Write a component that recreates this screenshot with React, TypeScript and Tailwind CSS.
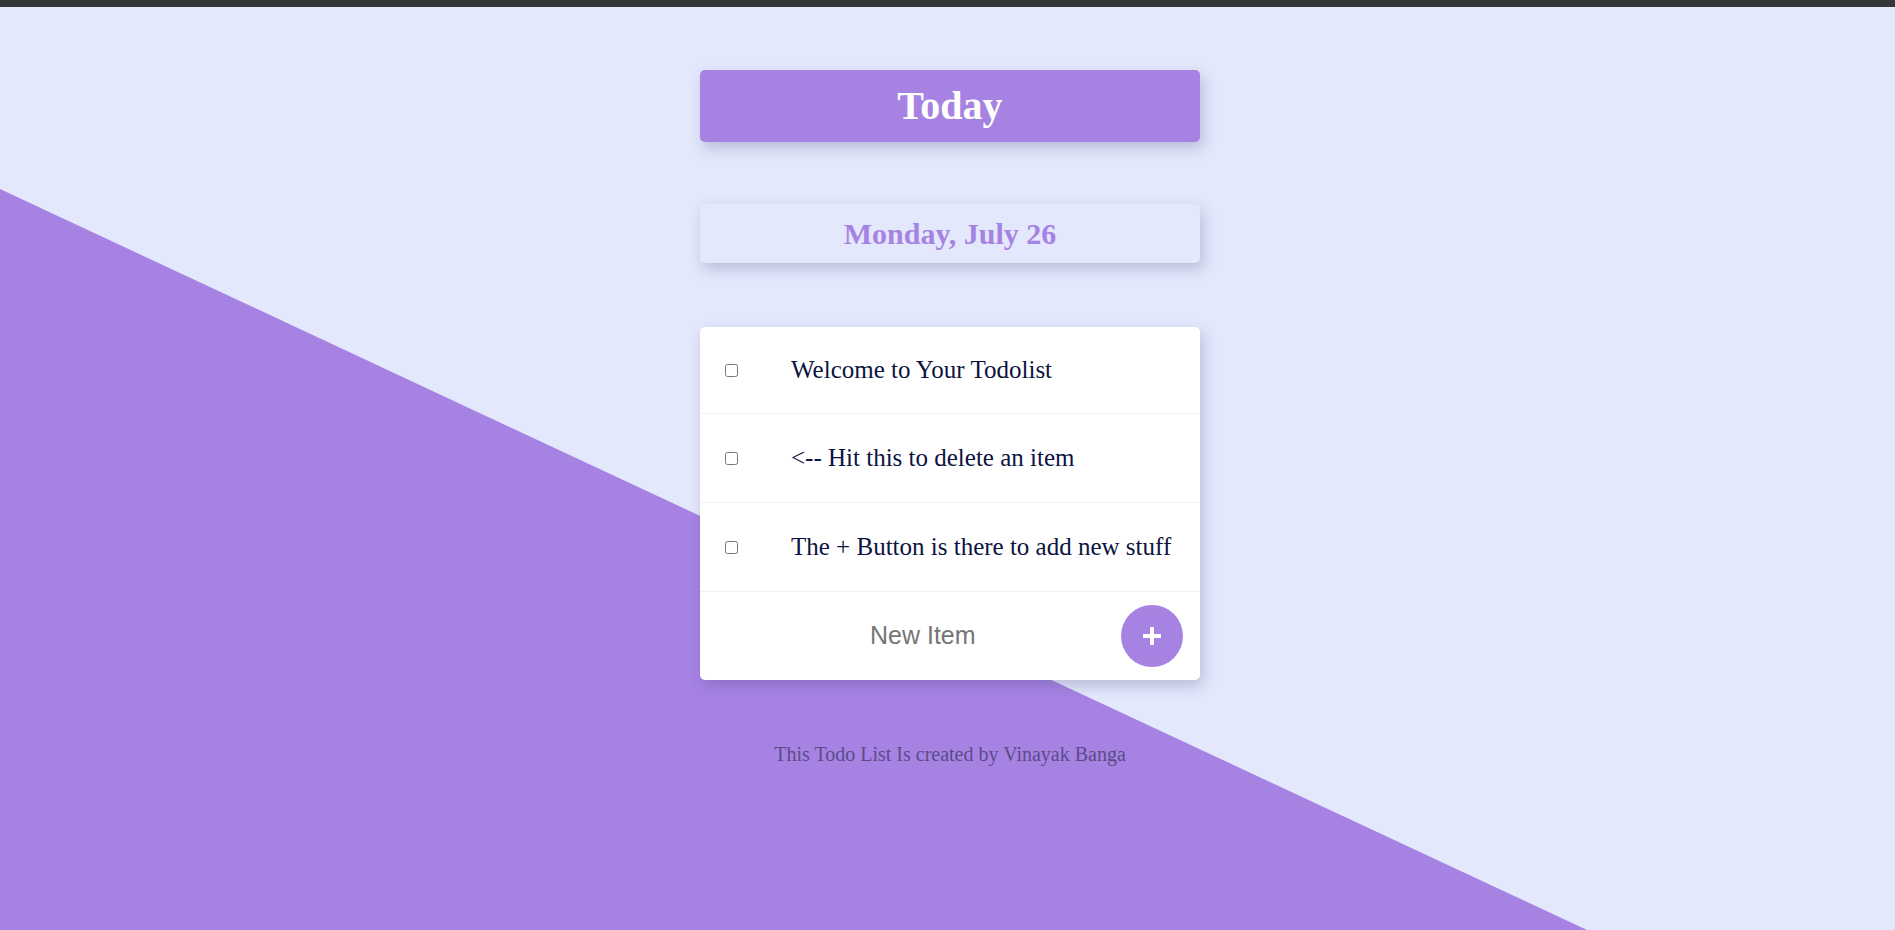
import { useState } from "react";

const items = [
    "Welcome to Your Todolist",
    "<-- Hit this to delete an item",
    "The + Button is there to add new stuff",
];

export default function App() {
    const [text, setText] = useState("");

    return (
        <div className="flex flex-col h-[930px] overflow-hidden bg-[#e3e8fc] font-['Liberation_Serif',serif]">
            <div className="h-[7px] shrink-0 bg-[#35363a]"/>
            <div className="relative flex-1">
                {/* diagonal purple background */}
                <div className="absolute inset-0 bg-[#a683e3] [clip-path:polygon(0_182px,1587px_100%,0_100%)]"/>
                <div className="relative flex flex-col items-center pl-[5px] pt-[63px]">
                    <div className="flex h-[72px] w-[500px] items-center justify-center rounded-[5px] bg-[#a683e3] shadow-[3px_6px_14px_rgba(60,60,120,0.25)]">
                        <h1 className="text-[40px] font-bold leading-none text-white">Today</h1>
                    </div>
                    <div className="mt-[62px] flex h-[59px] w-[500px] items-center justify-center rounded-[5px] bg-[#e3e8fc] shadow-[3px_6px_14px_rgba(60,60,120,0.25)]">
                        <h1 className="text-[30px] font-bold leading-none text-[#a683e3]">Monday, July 26</h1>
                    </div>
                    <div className="mt-[64px] w-[500px] rounded-[5px] bg-white shadow-[3px_6px_14px_rgba(60,60,120,0.25)]">
                        {items.map((item) => (
                            <div key={item} className="flex h-[89px] items-center border-b border-[#f1f1f1] pl-[25px] first:h-[87px]">
                                <input type="checkbox" className="m-0 h-[13px] w-[13px]"/>
                                <p className="ml-[53px] text-[25px] text-[#0b1440]">{item}</p>
                            </div>
                        ))}
                        <form className="flex h-[88px] items-center pr-[17px]" onSubmit={(e) => e.preventDefault()}>
                            <input
                                type="text"
                                value={text}
                                onChange={(e) => setText(e.target.value)}
                                placeholder="New Item"
                                autoComplete="off"
                                className="ml-[170px] w-[220px] bg-transparent font-['Liberation_Sans',sans-serif] text-[25px] text-[#333] outline-none placeholder:text-[#757575]"
                            />
                            <button type="submit" className="ml-auto flex h-[62px] w-[62px] items-center justify-center rounded-full bg-[#a683e3]">
                                <svg width="20" height="20" viewBox="0 0 20 20">
                                    <path d="M10 1v18M1 10h18" stroke="white" strokeWidth="4"/>
                                </svg>
                            </button>
                        </form>
                    </div>
                    <footer className="mt-[59px] text-[20px] text-[#5b4b8a]">
                        This Todo List Is created by Vinayak Banga
                    </footer>
                </div>
            </div>
        </div>
    )
}
